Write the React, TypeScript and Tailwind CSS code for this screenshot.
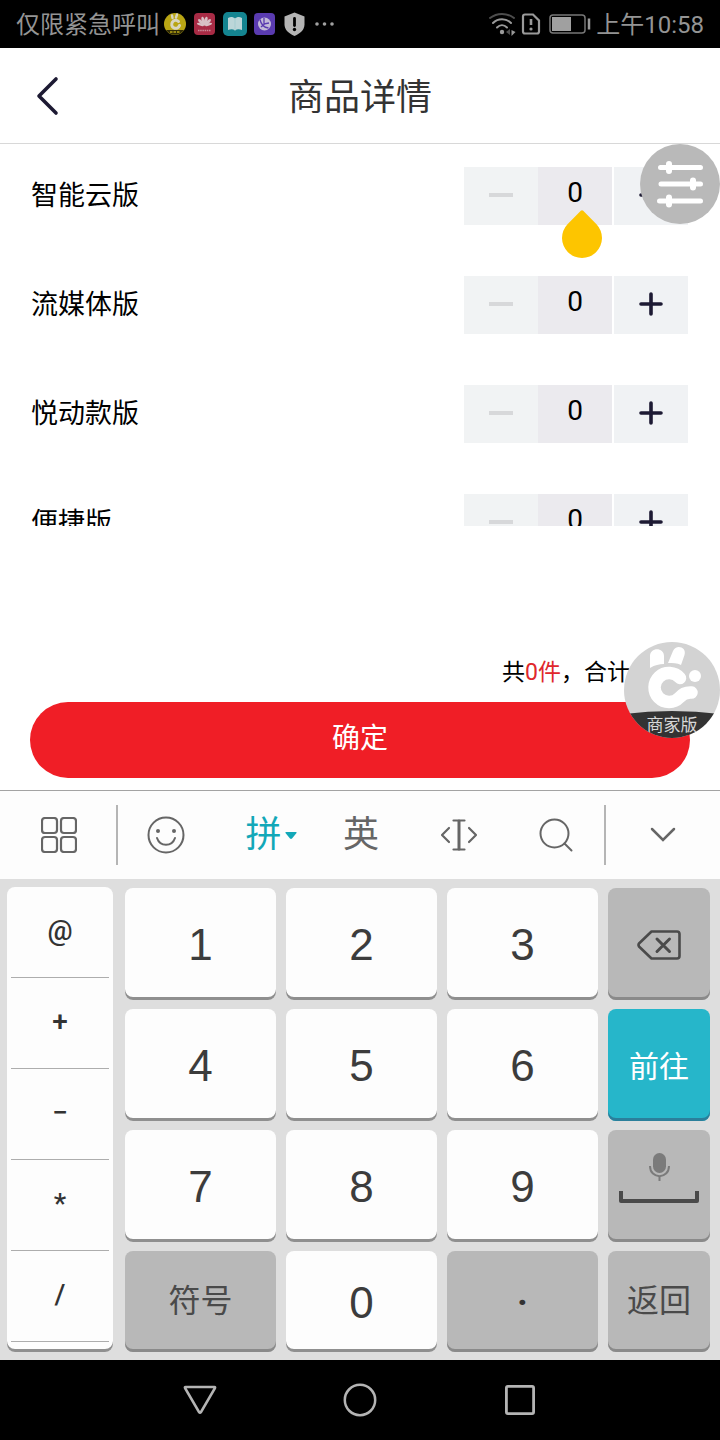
import type { ReactNode } from "react";

const PRODUCTS = ["智能云版", "流媒体版", "悦动款版", "便捷版"];
const SYMBOLS = ["@", "+", "−", "*", "/"];

const KEY_TONES = {
  light: "bg-[#fdfdfd] text-[#3c3c3c] shadow-[inset_0_-3px_0_#8f8f8f]",
  gray: "bg-[#b8b8b8] text-[#4a4a4a] shadow-[inset_0_-3px_0_#8a8a8a]",
  accent: "bg-[#26b6ca] text-white shadow-[inset_0_-3px_0_#2b7f9b]",
};

// === STATUS BAR ===
function AppIcons() {
  return (
    <svg className="h-6 w-[172px]" viewBox="0 0 172 24" aria-hidden="true">
      <circle cx="12" cy="12" r="11" fill="#b9a514" />
      <path d="M3 18a11 11 0 0 0 18 0z" fill="#2f2a08" />
      <path d="M15.500 9.500a4 4 0 1 0 1 4" fill="none" stroke="#d8d5c0" strokeWidth="3" strokeLinecap="round" />
      <path d="M9.500 6 9 3.500M13 5.500l1-3" stroke="#d8d5c0" strokeWidth="2.400" strokeLinecap="round" />
      <path d="M7 20h10" stroke="#b9a514" strokeWidth="1.500" strokeDasharray="2.500 1" />

      <rect x="31" y="1" width="21" height="22" rx="4" fill="#a82b45" />
      <g fill="#d8c0c5">
        <ellipse cx="41.500" cy="9" rx="1.600" ry="4.500" transform="rotate(-14 41.500 14)" />
        <ellipse cx="41.500" cy="9" rx="1.600" ry="4.500" transform="rotate(14 41.500 14)" />
        <ellipse cx="41.500" cy="9" rx="1.500" ry="4.200" transform="rotate(-42 41.500 14)" />
        <ellipse cx="41.500" cy="9" rx="1.500" ry="4.200" transform="rotate(42 41.500 14)" />
        <ellipse cx="41.500" cy="9.500" rx="1.200" ry="3.500" transform="rotate(-70 41.500 14)" />
        <ellipse cx="41.500" cy="9.500" rx="1.200" ry="3.500" transform="rotate(70 41.500 14)" />
      </g>
      <path d="M35 18.500h13" stroke="#c98c99" strokeWidth="1.500" strokeDasharray="1.500 .7" />

      <rect x="60" y="0" width="24" height="24" rx="5" fill="#148490" />
      <path d="M65 6c3-1.500 5-1 7 .5 2-1.500 4-2 7-.5v12c-3-1-5-1-7 .5-2-1.500-4-1.500-7-.5z" fill="#bcd6d9" />
      <path d="M72 6.500v12" stroke="#9cc8cd" strokeWidth=".7" />

      <rect x="91" y="1" width="21" height="22" rx="4" fill="#5a3bb0" />
      <circle cx="101.500" cy="12" r="6.500" fill="#c3bad8" />
      <path d="M97 7.500c1 5 4 8 8.500 8.500M101 6v6l5-1M98 15l3.500-3" fill="none" stroke="#5a3bb0" strokeWidth="1.300" />

      <path d="M131.500 0.500l10 4v8c0 5-4 9-10 11.500-6-2.500-10-6.500-10-11.500v-8z" fill="#b4b4b4" />
      <path d="M131.500 6.500v7" stroke="#000" strokeWidth="2.800" strokeLinecap="round" />
      <circle cx="131.500" cy="17.500" r="1.700" fill="#000" />

      <g fill="#a0a0a0">
        <circle cx="154" cy="12" r="1.800" />
        <circle cx="161.500" cy="12" r="1.800" />
        <circle cx="169" cy="12" r="1.800" />
      </g>
    </svg>
  );
}

function SystemIcons() {
  return (
    <svg className="h-6 w-[104px]" viewBox="0 0 104 24" fill="none" aria-hidden="true">
      <g strokeLinecap="round" strokeWidth="2">
        <path d="M2 6c7-5.500 17-5.500 24 0" stroke="#4d4d4d" />
        <path d="M5 11c5-5 13-5 18 0" stroke="#9a9a9a" />
        <path d="M9 15.500c3-3 7-3 10 0" stroke="#9a9a9a" />
      </g>
      <circle cx="14" cy="20" r="2.200" fill="#9a9a9a" />
      <path d="M22 17v6l-4-3z" fill="#4d4d4d" />
      <path d="M23.500 18v6l4-4z" fill="#9a9a9a" />
      <path d="M37 2.500h8l6 6v11a2 2 0 0 1-2 2H37a2 2 0 0 1-2-2v-15a2 2 0 0 1 2-2z" stroke="#9a9a9a" strokeWidth="2.200" />
      <path d="M43 7v6" stroke="#9a9a9a" strokeWidth="2.600" />
      <circle cx="43" cy="17" r="1.600" fill="#9a9a9a" />
      <rect x="62" y="3" width="35" height="18" rx="3" stroke="#777" strokeWidth="1.500" />
      <rect x="64" y="5" width="19" height="14" fill="#a0a0a0" />
      <path d="M101 6.500v11" stroke="#9a9a9a" strokeWidth="2.500" />
    </svg>
  );
}

function StatusBar() {
  return (
    <div className="flex h-12 items-center justify-between bg-black px-4 text-2xl text-[#949494]">
      <div className="flex items-center gap-[3px]">
        <span className="pt-[2px]">仅限紧急呼叫</span>
        <AppIcons />
      </div>
      <div className="flex items-center gap-1">
        <SystemIcons />
        <span className="pt-[2px]">上午10:58</span>
      </div>
    </div>
  );
}

// === PRODUCT LIST ===
function Stepper({ label, active }: { label: string; active: boolean }) {
  return (
    <div className="flex h-[58px]">
      <button aria-label={`减少${label}`} className="flex w-[74px] items-center justify-center bg-[#f1f3f4] pb-[2px]">
        <svg className="w-6" viewBox="0 0 24 24" stroke="#d7d8da" strokeWidth="4">
          <path d="M0 12h24" />
        </svg>
      </button>
      <div className="relative">
        <input
          aria-label={label}
          defaultValue="0"
          inputMode="numeric"
          className="h-[58px] w-[74px] rounded-none bg-[#ebeaee] pb-2 text-center text-[28px] text-black outline-none"
        />
        {/* text cursor handle */}
        {active && (
          <svg className="absolute left-6 top-[43px] z-10 h-12 w-10" viewBox="0 0 40 48" fill="#fdc500">
            <path d="M18.800 .8Q20-.4 21.200 .8L34.500 14.200A20 20 0 1 1 5.500 14.200z" />
          </svg>
        )}
      </div>
      <button aria-label={`增加${label}`} className="ml-[2px] flex w-[74px] items-center justify-center bg-[#f0f2f4] pb-[2px]">
        <svg className="w-6" viewBox="0 0 24 24" stroke="#1d1a33" strokeWidth="3.600" strokeLinecap="round">
          <path d="M2 12h20M12 2v20" />
        </svg>
      </button>
    </div>
  );
}

function ProductList() {
  return (
    <ul className="h-[382px] space-y-[51px] overflow-y-auto pl-[31px] pr-8 pt-[23px] [scrollbar-width:none]">
      {PRODUCTS.map((name, i) => (
        <li key={name} className="flex items-center justify-between">
          <span className="text-[27px] text-black">{name}</span>
          <Stepper label={name} active={i === 0} />
        </li>
      ))}
    </ul>
  );
}

// === FLOATING BUTTONS ===
function FilterBubble() {
  return (
    <button aria-label="设置" className="absolute right-0 top-36 z-20 h-20 w-20 rounded-full bg-[#b9b9b9]">
      <svg viewBox="0 0 80 80" stroke="#fff" strokeWidth="5" strokeLinecap="round">
        <path d="M20.500 23.500h40M21 40h39.500M19.500 57h41" />
        <path d="M29 20v7M53 36.500v7M29 53.500v7" strokeWidth="6" />
      </svg>
    </button>
  );
}

function MerchantBubble() {
  return (
    <button aria-label="商家版" className="absolute right-0 top-[642px] z-20 h-24 w-24 overflow-hidden rounded-full bg-[#d3d3d3]">
      <svg viewBox="0 0 96 96">
        <path d="M0 72Q48 66 96 72V96H0z" fill="#333" />
        <path d="M26 26V14c0-9 14-9 14 0v8c-5 0-9 1-14 4z" fill="#fff" />
        <path d="M44 21 49 9c3-7 14-4 11.500 4L57 23c-4-2-8-2-13-2z" fill="#fff" />
        <g fill="none" stroke="#fff" strokeLinecap="round" strokeWidth="12.500">
          <path d="M56 36A14.500 14.500 0 1 0 55.500 55.500Q60 50 67.500 50.500" />
        </g>
        <circle cx="71" cy="34" r="6" fill="#fff" />
        <text x="48" y="89" textAnchor="middle" fontSize="17" fill="#d8d8d8">商家版</text>
      </svg>
    </button>
  );
}

// === KEYBOARD ===
function Tool({ label, children }: { label: string; children: ReactNode }) {
  return (
    <button aria-label={label} className="flex flex-1 items-center justify-center">
      {children}
    </button>
  );
}

function Divider() {
  return <span className="-mx-px h-[60px] w-[2px] bg-[#b5b5b5]" />;
}

function Toolbar() {
  return (
    <div className="flex h-[89px] items-center border-t border-[#a3a3a3] bg-[#fdfdfd] text-4xl text-[#666]">
      <button aria-label="菜单" className="flex w-[117px] justify-center">
        <svg className="w-9" viewBox="0 0 36 36" fill="none" stroke="#666" strokeWidth="2.200">
          <rect x="1" y="1" width="15" height="15" rx="3" />
          <rect x="20" y="1" width="15" height="15" rx="3" />
          <rect x="1" y="20" width="15" height="15" rx="3" />
          <rect x="20" y="20" width="15" height="15" rx="3" />
        </svg>
      </button>
      <Divider />
      <div className="flex h-[60px] flex-1">
        <Tool label="表情">
          <svg className="w-[38px]" viewBox="0 0 38 38" fill="none" stroke="#666" strokeWidth="2">
            <circle cx="19" cy="19" r="17.500" />
            <path d="M10 22c3 9 15 9 18 0" strokeLinecap="round" />
            <circle cx="11" cy="15" r="2" fill="#666" stroke="none" />
            <circle cx="27" cy="15" r="2" fill="#666" stroke="none" />
          </svg>
        </Tool>
        <Tool label="拼音">
          <span className="text-[#12a8b8]">拼</span>
          <svg className="-mr-4 ml-1 w-3" viewBox="0 0 12 7" fill="#12a8b8">
            <path d="M1 0h10q1 0 .5 1L7 6.500q-1 .8-2 0L.5 1Q0 0 1 0z" />
          </svg>
        </Tool>
        <Tool label="英文">英</Tool>
        <Tool label="移动光标">
          <svg className="w-[38px]" viewBox="0 0 38 32" fill="none" stroke="#666" strokeWidth="2.200" strokeLinecap="round" strokeLinejoin="round">
            <path d="M9 9 2 16l7 7M29 9l7 7-7 7M13.500 1.500h11M13.500 30.500h11" />
            <path d="M19 2v28" strokeWidth="3" />
          </svg>
        </Tool>
        <Tool label="搜索">
          <svg className="w-[34px]" viewBox="0 0 34 34" fill="none" stroke="#666" strokeWidth="2" strokeLinecap="round">
            <circle cx="15.500" cy="15.500" r="14" />
            <path d="m25.500 25.500 7 7" />
          </svg>
        </Tool>
      </div>
      <Divider />
      <button aria-label="收起" className="flex w-[115px] justify-center">
        <svg className="w-[26px]" viewBox="0 0 26 16" fill="none" stroke="#666" strokeWidth="2.500" strokeLinecap="round">
          <path d="m2 2 11 11L24 2" />
        </svg>
      </button>
    </div>
  );
}

interface KeyProps {
  label?: string;
  tone?: keyof typeof KEY_TONES;
  className?: string;
  children: ReactNode;
}

function Key({ label, tone = "light", className = "pt-[2px]", children }: KeyProps) {
  return (
    <button aria-label={label} className={`flex flex-col items-center justify-center rounded-lg ${KEY_TONES[tone]} ${className}`}>
      {children}
    </button>
  );
}

function Digit({ value }: { value: number }) {
  return <Key className="pt-[2px] font-['Liberation_Sans',sans-serif] text-[44px]">{value}</Key>;
}

function Keypad() {
  return (
    <div className="flex gap-3 bg-[#dedede] pb-2 pl-[7px] pr-[10px] pt-2">
      <div className="w-[106px] rounded-lg bg-[#fdfdfd] px-1 shadow-[inset_0_-3px_0_#8f8f8f]">
        {SYMBOLS.map((s) => (
          <button key={s} className="flex h-[91px] w-full items-center justify-center border-b border-[#adadad] pb-[2px] text-[28px] font-medium text-[#333]">
            {s}
          </button>
        ))}
      </div>
      <div className="mt-[1px] grid flex-1 grid-cols-[151fr_151fr_151fr_102fr] grid-rows-[112px_112px_112px_101px] gap-x-[10px] gap-y-[9px]">
        <Digit value={1} />
        <Digit value={2} />
        <Digit value={3} />
        <Key label="删除" tone="gray">
          <svg className="w-11" viewBox="0 0 44 30" fill="none" stroke="#4a4a4a" strokeWidth="2.600" strokeLinejoin="round" strokeLinecap="round">
            <path d="M14.500 1.500H40q2.500 0 2.500 2.500v22q0 2.500-2.500 2.500H14.500L2 16.500Q1 15 2 13.500z" />
            <path d="m20 9 12.500 12.500M32.500 9 20 21.500" strokeWidth="3" />
          </svg>
        </Key>
        <Digit value={4} />
        <Digit value={5} />
        <Digit value={6} />
        <Key tone="accent" className="pt-[2px] text-[30px]">前往</Key>
        <Digit value={7} />
        <Digit value={8} />
        <Digit value={9} />
        <Key label="空格" tone="gray" className="pb-4">
          <svg className="w-20" viewBox="0 0 80 50" fill="none">
            <rect x="34" y="0" width="13" height="20" rx="6.500" fill="#7b7b7b" />
            <path d="M31 13c0 13.500 19 13.500 19 0M40.500 23v5" stroke="#7b7b7b" strokeWidth="2" />
            <path d="M2 38v10h76V38" stroke="#4a4a4a" strokeWidth="4" strokeLinejoin="round" />
          </svg>
        </Key>
        <Key tone="gray" className="pb-[2px] text-[32px]">符号</Key>
        <Digit value={0} />
        <Key tone="gray" className="text-[32px] font-black text-[#333]">·</Key>
        <Key tone="gray" className="pb-[2px] text-[32px]">返回</Key>
      </div>
    </div>
  );
}

function NavBar() {
  return (
    <nav className="flex h-20 items-center justify-center gap-[124px] bg-black">
      <button aria-label="返回">
        <svg className="w-9" viewBox="0 0 36 36" fill="none" stroke="#b4b4b4" strokeWidth="2.500" strokeLinejoin="round">
          <path d="M3.500 5h29q1 0 .5 1L19 30q-1 1.500-2 0L3 6q-.5-1 .5-1z" />
        </svg>
      </button>
      <button aria-label="主屏幕">
        <svg className="w-9" viewBox="0 0 36 36" fill="none" stroke="#b4b4b4" strokeWidth="2.500">
          <circle cx="18" cy="18" r="15.200" />
        </svg>
      </button>
      <button aria-label="最近任务">
        <svg className="w-9" viewBox="0 0 36 36" fill="none" stroke="#b4b4b4" strokeWidth="2.800">
          <rect x="4.400" y="4.400" width="27.200" height="27.200" rx="1.500" />
        </svg>
      </button>
    </nav>
  );
}

// === MAIN COMPONENT ===
export default function App() {
  return (
    <div className="relative flex min-h-screen flex-col bg-white font-[Roboto,'Noto_Sans_CJK_SC',sans-serif]">
      <StatusBar />
      <header className="grid h-24 grid-cols-[1fr_auto_1fr] items-center border-b border-[#d8d8d8] px-8">
        <button aria-label="返回" className="w-8">
          <svg className="h-10 w-8" viewBox="0 0 32 40" fill="none" stroke="#1d1a33" strokeWidth="3.600" strokeLinecap="round" strokeLinejoin="round">
            <path d="M24 3 7 20l17 17" />
          </svg>
        </button>
        <h1 className="pt-1 text-4xl text-[#333]">商品详情</h1>
      </header>

      <ProductList />

      <div className="mt-auto px-[30px] pb-3">
        <p className="mb-[11px] pr-[60px] text-right text-[23px] leading-9 text-black">
          共<span className="text-[#e0272c]">0件</span>，合计
        </p>
        <button className="h-[76px] w-full rounded-full bg-[#f01e26] pb-[2px] text-[28px] text-white">确定</button>
      </div>

      <Toolbar />
      <Keypad />
      <NavBar />

      <FilterBubble />
      <MerchantBubble />
    </div>
  );
}
